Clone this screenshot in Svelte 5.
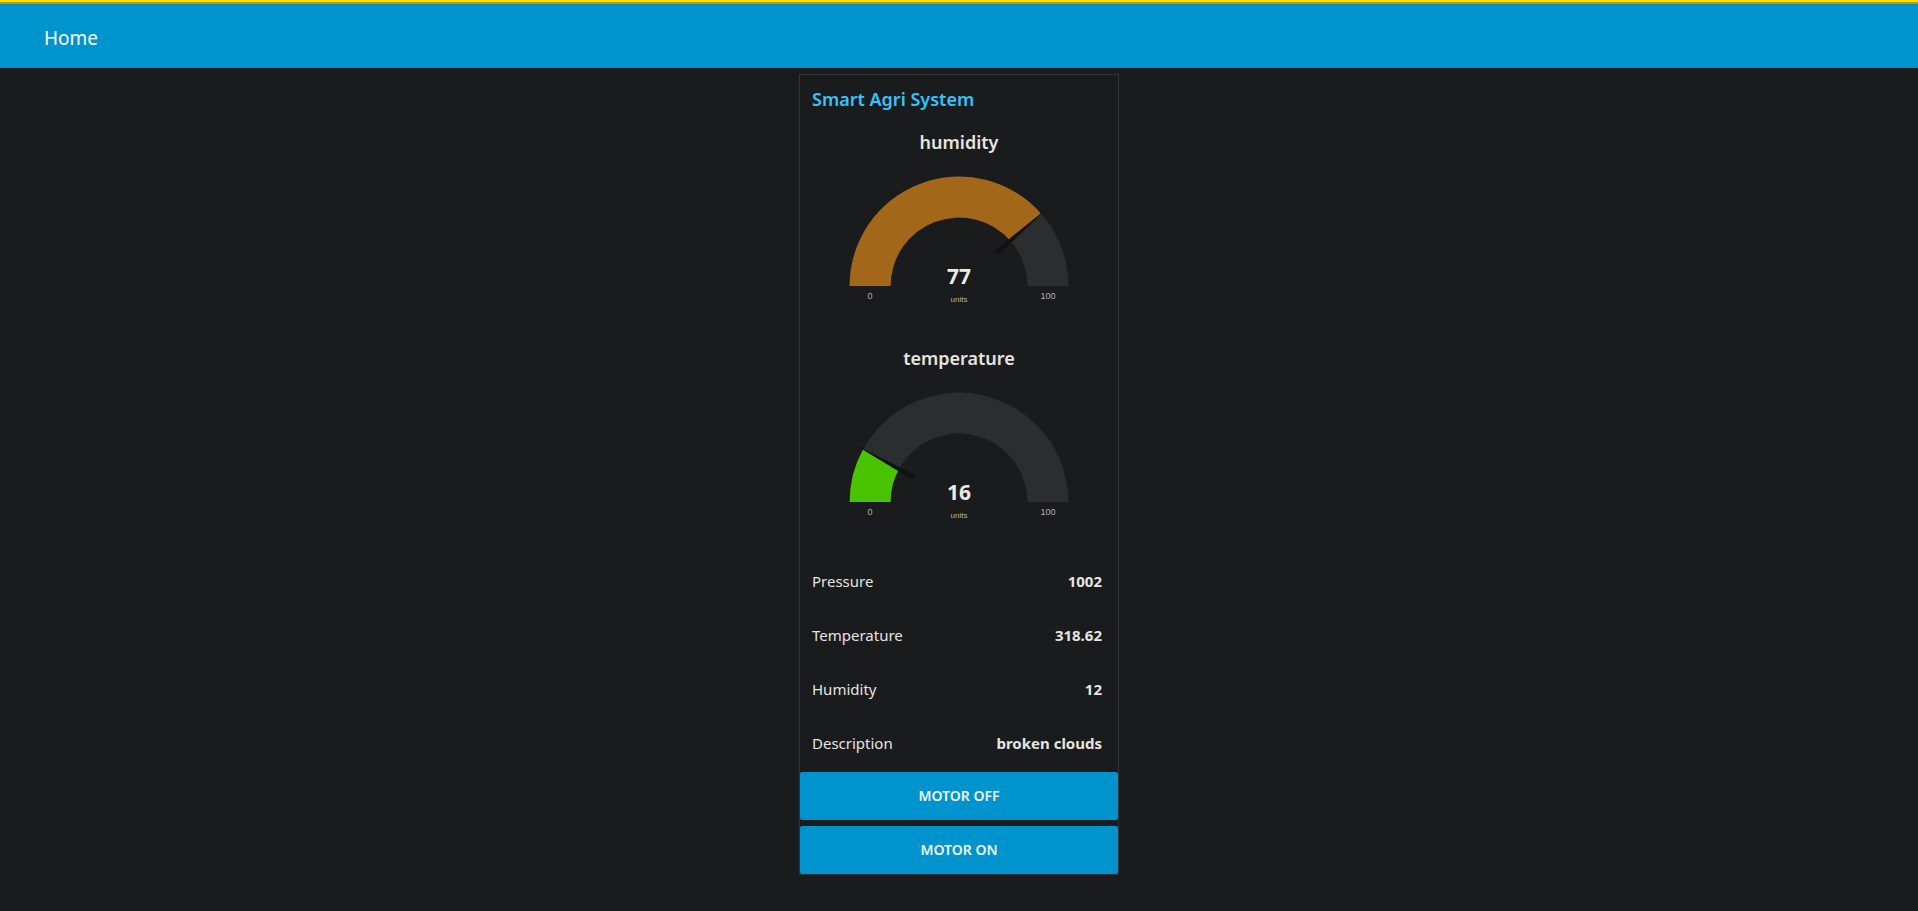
<script>
  const gauges = [
    { label: 'humidity', value: 77, color: '#a26718' },
    { label: 'temperature', value: 16, color: '#4ac402' }
  ];

  const readings = [
    { label: 'Pressure', value: '1002' },
    { label: 'Temperature', value: '318.62' },
    { label: 'Humidity', value: '12' },
    { label: 'Description', value: 'broken clouds' }
  ];

  const min = 0;
  const max = 100;
  const cx = 159;
  const cy = 126;
  const outer = 109.4;
  const inner = 68.4;

  // Half-ring segment from the left end up to the given fraction of the scale.
  function arc(fraction) {
    const a = Math.PI * (1 - fraction);
    const c = Math.cos(a);
    const s = Math.sin(a);
    return `M${cx - outer} ${cy}A${outer} ${outer} 0 0 1 ${cx + outer * c} ${cy - outer * s}` +
      `L${cx + inner * c} ${cy - inner * s}A${inner} ${inner} 0 0 0 ${cx - inner} ${cy}Z`;
  }
</script>

<header class="toolbar">
  <h1>Home</h1>
</header>

<main>
  <section class="card">
    <h2 class="card-title">Smart Agri System</h2>
    <div class="widgets">
      {#each gauges as g}
        <div class="gauge">
          <h3>{g.label}</h3>
          <svg viewBox="0 0 318 174" role="img" aria-label={g.label}>
            <path d={arc(1)} fill="#2c2d2f" />
            <path d={arc(g.value / max)} fill={g.color} />
            <polygon
              points="120,0 50.5,-2.8 50.5,2.8"
              fill="#111214"
              transform="translate({cx} {cy}) rotate({-180 * (1 - g.value / max)})"
            />
            <text class="value" x="159" y="124">{g.value}</text>
            <text class="small" x="159" y="142">units</text>
            <text class="limit" x="70" y="139">{min}</text>
            <text class="limit" x="248" y="139">{max}</text>
          </svg>
        </div>
      {/each}
      {#each readings as r}
        <div class="reading">
          <span>{r.label}</span>
          <strong>{r.value}</strong>
        </div>
      {/each}
      <button type="button">Motor off</button>
      <button type="button">Motor on</button>
    </div>
  </section>
</main>

<style>
  :global(body) {
    margin: 0;
    background: #1a1b1c;
    color: #e5e5e0;
    font-family: 'Segoe UI', 'Noto Sans', sans-serif;
  }

  .toolbar {
    display: flex;
    align-items: center;
    box-sizing: border-box;
    height: 68px;
    padding: 8px 44px 0;
    background: linear-gradient(#ffdf00 2px, #b59b10 2px 4px, #0094ce 4px);
    color: #fff;
  }

  h1,
  h2,
  h3 {
    margin: 0;
  }

  h1 {
    font-size: 19px;
    font-weight: 400;
  }

  main {
    display: flex;
    justify-content: center;
    padding: 6px;
  }

  .card {
    box-sizing: border-box;
    width: 100%;
    max-width: 320px;
    border: 1px solid #333436;
  }

  .card-title {
    padding: 0 12px;
    font-size: 18px;
    font-weight: 600;
    line-height: 49px;
    color: #31c4ff;
  }

  .widgets {
    display: flex;
    flex-direction: column;
    gap: 6px;
  }

  .gauge h3 {
    font-size: 18px;
    font-weight: 600;
    line-height: 36px;
    text-align: center;
  }

  .gauge svg {
    display: block;
    width: 100%;
  }

  text {
    font-family: 'Liberation Sans', Arial, sans-serif;
    fill: #b5b5ad;
    text-anchor: middle;
  }

  .value {
    font-family: 'Segoe UI', 'Noto Sans', sans-serif;
    font-size: 21px;
    font-weight: 700;
    fill: #ebebe8;
  }

  .small {
    font-size: 8px;
  }

  .limit {
    font-size: 9px;
  }

  .reading {
    display: flex;
    align-items: center;
    justify-content: space-between;
    box-sizing: border-box;
    height: 48px;
    padding: 2px 16px 0 12px;
    font-size: 15px;
  }

  button {
    height: 48px;
    padding: 0 0 2px;
    border: 0;
    border-radius: 2px;
    background: #0094ce;
    color: #f0f6f8;
    font: 600 14px 'Segoe UI', 'Noto Sans', sans-serif;
    text-transform: uppercase;
    cursor: pointer;
  }
</style>
